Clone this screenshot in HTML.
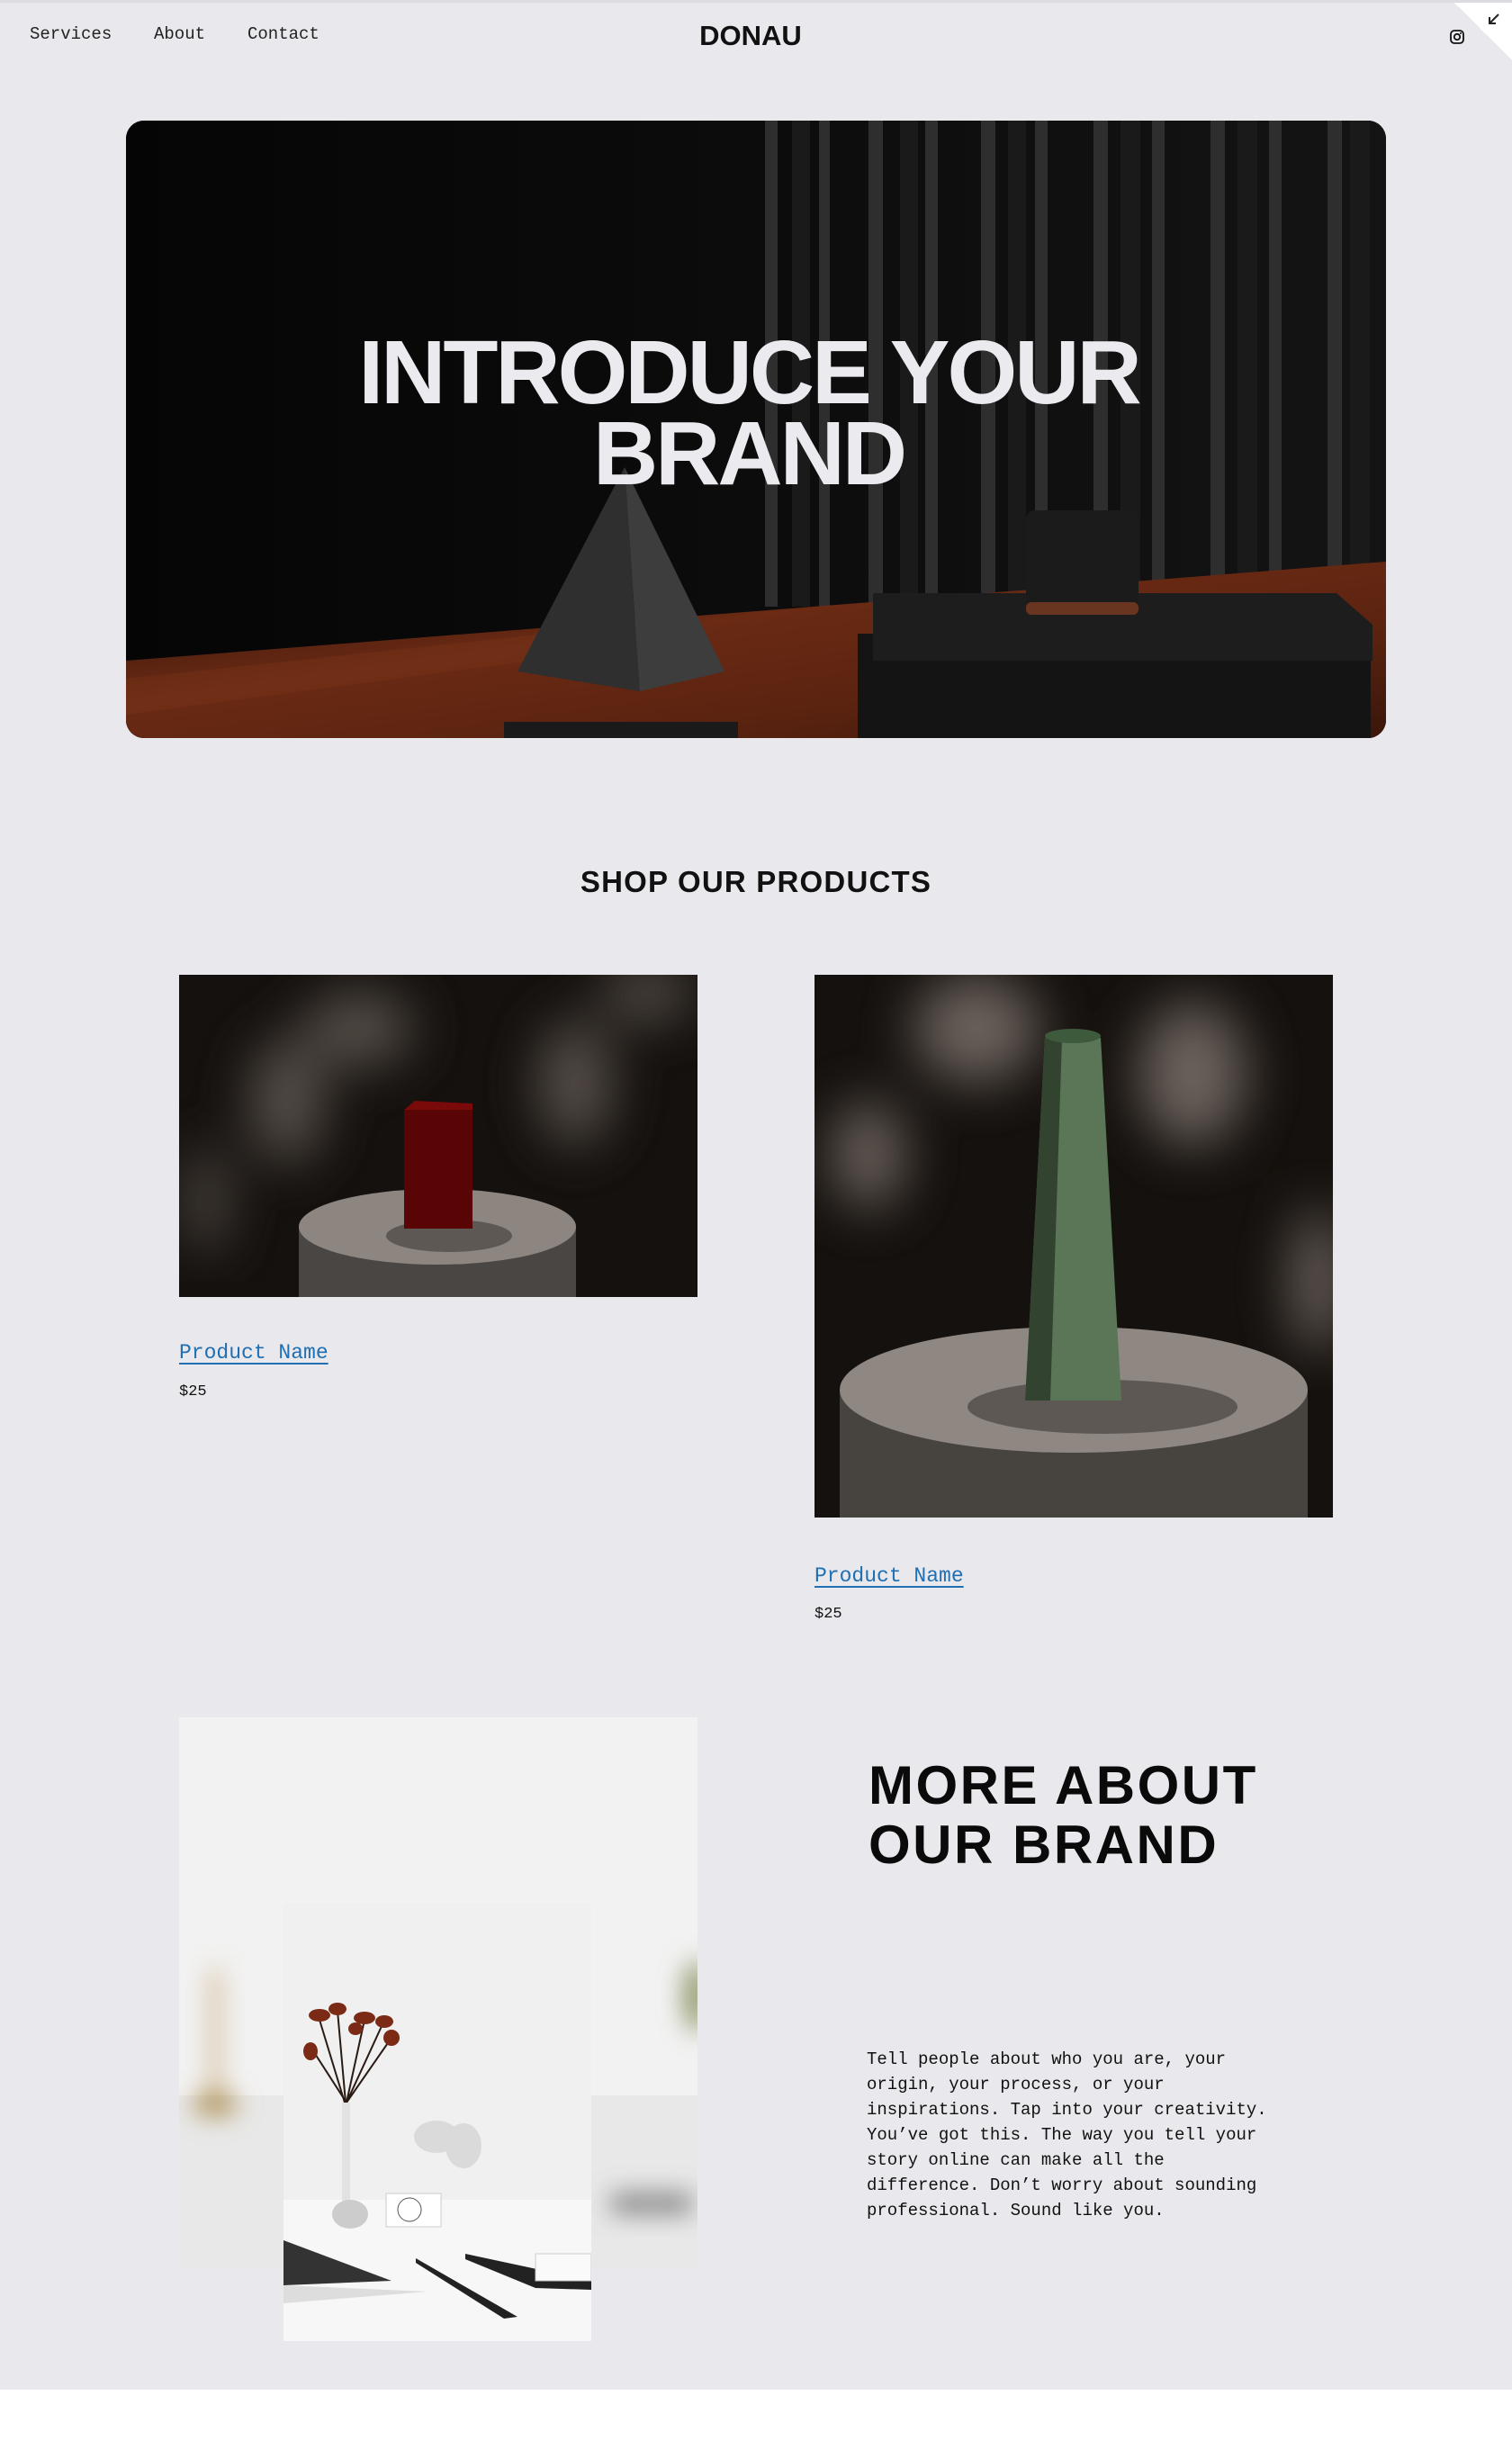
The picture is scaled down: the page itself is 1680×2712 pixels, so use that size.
<!DOCTYPE html>
<html><head><meta charset="utf-8">
<style>
*{margin:0;padding:0;box-sizing:border-box}
html,body{width:1680px;height:2712px;background:#fff;overflow:hidden}
.page{position:absolute;left:0;top:0;width:1680px;height:2655px;background:#e9e8ec;border-top:3px solid #dcdbe0}
.nav a{position:absolute;top:24px;font-size:19px;color:#222;text-decoration:none;font-family:"Liberation Mono",monospace}
.logo{position:absolute;top:19px;left:0;width:1668px;text-align:center;font:bold 31px "Liberation Sans",sans-serif;color:#111}
.hero{position:absolute;left:140px;top:131px;width:1400px;height:686px;border-radius:20px;overflow:hidden;background:#080808}
.hero h1{position:absolute;left:-8px;top:235px;width:1400px;text-align:center;color:#ebeaee;font:bold 100px/90px "Liberation Sans",sans-serif;letter-spacing:-3px}
.shop{position:absolute;left:0;top:958px;width:1680px;text-align:center;font:bold 33px "Liberation Sans",sans-serif;color:#111;letter-spacing:1.2px}
.img{position:absolute;overflow:hidden}
.pname{position:absolute;font-size:23px;color:#1f6fb2;text-decoration:underline;text-underline-offset:5px;text-decoration-thickness:2px;font-family:"Liberation Mono",monospace}
.price{position:absolute;font-size:17px;color:#111;font-family:"Liberation Mono",monospace}
.more{position:absolute;left:965px;top:1948px;font:bold 60px/66px "Liberation Sans",sans-serif;color:#0a0a0a;letter-spacing:2.5px}
.para{position:absolute;left:963px;top:2271px;width:452px;font-size:19px;line-height:28px;color:#111;font-family:"Liberation Mono",monospace}
.curl{position:absolute;right:0;top:0;width:64px;height:64px;background:linear-gradient(45deg,transparent 50%,#fff 50%)}
</style></head><body>
<div class="page">
  <div class="nav">
    <a style="left:33px">Services</a>
    <a style="left:171px">About</a>
    <a style="left:275px">Contact</a>
  </div>
  <div class="logo">DONAU</div>
  <svg style="position:absolute;left:1610px;top:29px" width="18" height="18" viewBox="0 0 18 18"><rect x="2" y="2" width="14" height="14" rx="4" fill="none" stroke="#111" stroke-width="1.8"/><circle cx="9" cy="9" r="3.2" fill="none" stroke="#111" stroke-width="1.8"/><circle cx="13" cy="5" r="1" fill="#111"/></svg>
  <div class="curl"></div>
  <svg style="position:absolute;left:1652px;top:10px" width="16" height="16" viewBox="0 0 16 16"><path d="M13 3 L3 13 M3 6 V13 H10" fill="none" stroke="#222" stroke-width="2"/></svg>

  <div class="hero">
    <svg width="1400" height="686" viewBox="0 0 1400 686">
      <defs>
        <linearGradient id="bg" x1="0" x2="1"><stop offset="0" stop-color="#050505"/><stop offset="0.5" stop-color="#0c0c0c"/><stop offset="1" stop-color="#141414"/></linearGradient>
        <linearGradient id="tbl" x1="0" y1="0" x2="1" y2="1"><stop offset="0" stop-color="#2a1008"/><stop offset="0.4" stop-color="#6a2a14"/><stop offset="0.7" stop-color="#5a2310"/><stop offset="1" stop-color="#3a160a"/></linearGradient>
      </defs>
      <rect width="1400" height="686" fill="url(#bg)"/>
      <g fill="#2e2e2e">
        <rect x="710" y="0" width="14" height="540"/><rect x="770" y="0" width="12" height="540"/>
        <rect x="825" y="0" width="16" height="540"/><rect x="888" y="0" width="14" height="540"/>
        <rect x="950" y="0" width="16" height="540"/><rect x="1010" y="0" width="14" height="540"/>
        <rect x="1075" y="0" width="16" height="540"/><rect x="1140" y="0" width="14" height="540"/>
        <rect x="1205" y="0" width="16" height="540"/><rect x="1270" y="0" width="14" height="540"/>
        <rect x="1335" y="0" width="16" height="540"/>
      </g>
      <g fill="#1a1a1a">
        <rect x="740" y="0" width="20" height="540"/><rect x="860" y="0" width="20" height="540"/><rect x="980" y="0" width="20" height="540"/><rect x="1105" y="0" width="22" height="540"/><rect x="1235" y="0" width="22" height="540"/><rect x="1360" y="0" width="22" height="540"/>
      </g>
      <polygon points="0,600 1400,490 1400,686 0,686" fill="url(#tbl)"/>
      <polygon points="0,620 560,560 600,580 0,660" fill="#7a3418" opacity="0.4"/>
      <polygon points="554,385 435,612 571,634" fill="#2f2f2f"/>
      <polygon points="554,385 571,634 665,612" fill="#3d3d3d"/>
      <rect x="813" y="570" width="570" height="116" fill="#141414"/>
      <polygon points="830,525 1345,525 1385,560 1385,600 830,600" fill="#1d1d1d"/>
      <rect x="1000" y="433" width="125" height="112" rx="10" fill="#1b1b1b"/>
      <rect x="1000" y="535" width="125" height="14" rx="6" fill="#6a3520"/>
      <rect x="420" y="668" width="260" height="18" fill="#1a1a1a"/>
    </svg>
    <h1>INTRODUCE YOUR<br>BRAND</h1>
  </div>

  <div class="shop">SHOP OUR PRODUCTS</div>

  <div class="img" style="left:199px;top:1080px;width:576px;height:358px">
    <svg width="576" height="358" viewBox="0 0 576 358">
      <defs><filter id="bl"><feGaussianBlur stdDeviation="30"/></filter></defs>
      <rect width="576" height="358" fill="#15110e"/>
      <g filter="url(#bl)" fill="#6a625c" opacity="0.8">
        <ellipse cx="200" cy="60" rx="60" ry="40"/><ellipse cx="120" cy="140" rx="40" ry="70"/>
        <ellipse cx="440" cy="120" rx="40" ry="70"/><ellipse cx="520" cy="20" rx="50" ry="30"/><ellipse cx="30" cy="250" rx="20" ry="60"/>
      </g>
      <rect x="133" y="280" width="308" height="90" fill="#4a4644"/>
      <ellipse cx="287" cy="280" rx="154" ry="42" fill="#8c8580"/>
      <ellipse cx="300" cy="290" rx="70" ry="18" fill="#5e5854"/>
      <rect x="250" y="150" width="76" height="132" fill="#5a0505"/>
      <polygon points="250,150 262,140 326,143 326,150" fill="#7a0a0a"/>
    </svg>
  </div>
  <a class="pname" style="left:199px;top:1487px">Product Name</a>
  <div class="price" style="left:199px;top:1534px">$25</div>

  <div class="img" style="left:905px;top:1080px;width:576px;height:603px">
    <svg width="576" height="603" viewBox="0 0 576 603">
      <rect width="576" height="603" fill="#15110e"/>
      <g filter="url(#bl)" fill="#7a716b" opacity="0.85">
        <ellipse cx="180" cy="60" rx="70" ry="60"/><ellipse cx="420" cy="110" rx="60" ry="80"/><ellipse cx="560" cy="340" rx="30" ry="80"/><ellipse cx="60" cy="200" rx="40" ry="60"/>
      </g>
      <rect x="28" y="461" width="520" height="150" fill="#47433f"/>
      <ellipse cx="288" cy="461" rx="260" ry="70" fill="#8e8782"/>
      <ellipse cx="320" cy="480" rx="150" ry="30" fill="#5e5854"/>
      <polygon points="256,70 318,70 341,473 234,473" fill="#5b7656"/>
      <polygon points="256,70 275,70 262,473 234,473" fill="#324430"/>
      <ellipse cx="287" cy="68" rx="31" ry="8" fill="#3e5a3c"/>
    </svg>
  </div>
  <a class="pname" style="left:905px;top:1735px">Product Name</a>
  <div class="price" style="left:905px;top:1781px">$25</div>

  <div class="img" style="left:199px;top:1905px;width:576px;height:612px">
    <svg width="576" height="612" viewBox="0 0 576 612">
      <defs><filter id="b2"><feGaussianBlur stdDeviation="14"/></filter></defs>
      <rect width="576" height="612" fill="#f2f2f2"/>
      <rect y="420" width="576" height="192" fill="#e8e8e8"/>
      <g filter="url(#b2)">
        <rect x="35" y="280" width="10" height="140" fill="#c8a878"/>
        <ellipse cx="40" cy="430" rx="25" ry="12" fill="#a88a4a"/>
        <rect x="480" y="530" width="90" height="20" fill="#777"/>
        <ellipse cx="575" cy="310" rx="14" ry="40" fill="#8a9060"/>
      </g>
    </svg>
  </div>
  <div class="img" style="left:315px;top:2111px;width:342px;height:487px">
    <svg width="342" height="487" viewBox="0 0 342 487">
      <rect width="342" height="487" fill="#f0f0f0"/>
      <rect y="330" width="342" height="157" fill="#f7f7f7"/>
      <g stroke="#2a1a14" stroke-width="2" fill="none">
        <path d="M68 222 L40 130 M69 222 L60 120 M70 222 L90 130 M70 222 L110 135 M70 222 L120 150 M70 222 L30 160"/>
      </g>
      <g fill="#7a2a15">
        <ellipse cx="40" cy="125" rx="12" ry="7"/><ellipse cx="60" cy="118" rx="10" ry="7"/><ellipse cx="90" cy="128" rx="12" ry="7"/>
        <ellipse cx="112" cy="132" rx="10" ry="7"/><ellipse cx="120" cy="150" rx="9" ry="9"/><ellipse cx="30" cy="165" rx="8" ry="10"/><ellipse cx="80" cy="140" rx="8" ry="7"/>
      </g>
      <g fill="#ccc" opacity="0.6"><ellipse cx="170" cy="260" rx="25" ry="18"/><ellipse cx="200" cy="270" rx="20" ry="25"/></g>
      <rect x="65" y="222" width="9" height="125" fill="#e2e2e2"/>
      <ellipse cx="74" cy="346" rx="20" ry="16" fill="#ccc"/>
      <rect x="114" y="323" width="61" height="37" fill="#fff" stroke="#ccc"/>
      <circle cx="140" cy="341" r="13" fill="none" stroke="#555" stroke-width="1"/>
      <path d="M0 375 L120 420 L0 425 Z" fill="#333"/>
      <path d="M0 425 L160 432 L0 445 Z" fill="#ddd"/>
      <path d="M147 395 L260 460 L245 462 L147 400 Z" fill="#222"/>
      <path d="M202 390 L342 420 L342 430 L280 428 L202 396 Z" fill="#222"/>
      <rect x="280" y="390" width="62" height="30" fill="#fafafa" stroke="#ccc"/>
    </svg>
  </div>

  <div class="more">MORE ABOUT<br>OUR BRAND</div>
  <div class="para">Tell people about who you are, your origin, your process, or your inspirations. Tap into your creativity. You’ve got this. The way you tell your story online can make all the difference. Don’t worry about sounding professional. Sound like you.</div>
</div>
</body></html>
